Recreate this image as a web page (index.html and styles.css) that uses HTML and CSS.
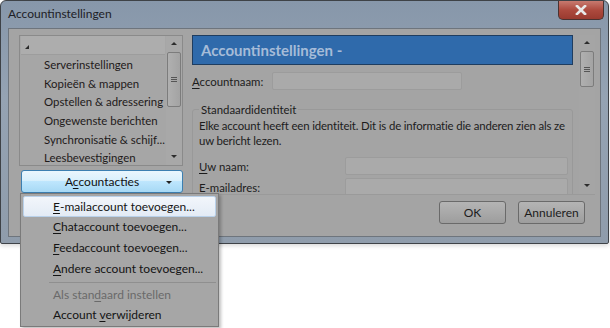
FILE: index.html
```html
<!DOCTYPE html>
<html>
<head>
  <meta charset="UTF-8">
  <title>Accountinstellingen</title>
  <link rel="stylesheet" href="styles.css">
</head>
<body>
  <div class="window">
    <div class="titlebar">
      <span class="title">Accountinstellingen</span>
      <button class="close-btn">
        <svg width="12" height="10" viewBox="0 0 12 10"><path d="M2 1 L10 9 M10 1 L2 9" stroke="#e8e8e8" stroke-width="2.6" stroke-linecap="square"/></svg>
      </button>
    </div>

    <div class="client">
      <div class="main">
        <!-- Left: account tree -->
        <div class="sidebar">
          <div class="tree">
            <div class="tree-list">
              <div class="tree-head"><span class="tree-arrow"></span></div>
              <div class="tree-item">Serverinstellingen</div>
              <div class="tree-item">Kopieën &amp; mappen</div>
              <div class="tree-item">Opstellen &amp; adressering</div>
              <div class="tree-item">Ongewenste berichten</div>
              <div class="tree-item">Synchronisatie &amp; schijf...</div>
              <div class="tree-item">Leesbevestigingen</div>
            </div>
            <div class="scrollbar">
              <span class="sb-up"></span>
              <span class="sb-thumb tree-thumb"><span class="grip"></span></span>
              <span class="sb-space"></span>
              <span class="sb-down"></span>
            </div>
          </div>
          <button class="actions-btn">A<u>c</u>countacties <span class="caret"></span></button>
        </div>

        <!-- Right: settings pane -->
        <div class="pane">
          <div class="pane-body">
            <div class="pane-header">Accountinstellingen -</div>
            <div class="row account-row">
              <label><u>A</u>ccountnaam:</label>
              <div class="input name-input"></div>
            </div>
            <fieldset class="group">
              <legend>Standaardidentiteit</legend>
              <p class="hint">Elke account heeft een identiteit. Dit is de informatie die anderen zien als ze uw bericht lezen.</p>
              <div class="row field-row">
                <label><u>U</u>w naam:</label>
                <div class="input wide-input"></div>
              </div>
              <div class="row field-row">
                <label>E-<u>m</u>ailadres:</label>
                <div class="input wide-input"></div>
              </div>
            </fieldset>
          </div>
          <div class="scrollbar pane-scroll">
            <span class="sb-up"></span>
            <span class="sb-thumb pane-thumb"><span class="grip"></span></span>
            <span class="sb-space"></span>
            <span class="sb-down"></span>
          </div>
        </div>
      </div>

      <div class="footer">
        <button class="btn">OK</button>
        <button class="btn">Annuleren</button>
      </div>
    </div>
  </div>

  <!-- Dropdown menu of Accountacties -->
  <div class="menu">
    <div class="menu-item active"><u>E</u>-mailaccount toevoegen...</div>
    <div class="menu-item"><u>C</u>hataccount toevoegen...</div>
    <div class="menu-item"><u>F</u>eedaccount toevoegen...</div>
    <div class="menu-item"><u>A</u>ndere account toevoegen...</div>
    <div class="menu-sep"></div>
    <div class="menu-item small disabled">Als stan<u>d</u>aard instellen</div>
    <div class="menu-item small">Account <u>v</u>erwijderen</div>
  </div>
</body>
</html>
```

FILE: styles.css
```css
* {
  box-sizing: border-box;
  margin: 0;
  padding: 0;
}

body {
  font-family: Lato, 'Open Sans', sans-serif;
  font-size: 11.4px;
  width: 610px;
  height: 328px;
  background: #ffffff;
  color: #1c1c1c;
  overflow: hidden;
  position: relative;
}

u {
  text-decoration: underline;
  text-underline-offset: 2px;
}

/* Window frame */
.window {
  width: 609px;
  height: 244px;
  background: linear-gradient(180deg, #8797aa 0%, #95a3b3 40%, #8f9cab 100%);
  border: 1px solid #3e4247;
  border-radius: 6px 6px 2px 2px;
  padding: 0 7px 6px 7px;
  display: flex;
  flex-direction: column;
  box-shadow: 0 2px 4px rgba(0,0,0,0.15);
}

.titlebar {
  height: 27px;
  display: flex;
  align-items: flex-start;
  justify-content: space-between;
}

.title {
  margin-top: 5px;
  font-size: 12px;
  color: #1d2026;
}

.close-btn {
  width: 46px;
  height: 19px;
  margin-right: -3px;
  border: 1px solid #4a3230;
  border-top: none;
  border-radius: 0 0 5px 5px;
  background: linear-gradient(180deg, #c77a70 0%, #ad4a3e 50%, #9a3a2f 100%);
  display: flex;
  align-items: center;
  justify-content: center;
}

.client {
  flex: 1;
  background: #a4a4a4;
  border: 1px solid #6e757d;
  padding: 6px 7px 0 10px;
  display: flex;
  flex-direction: column;
}

.main {
  display: flex;
  gap: 7px;
  height: 160px;
}

/* Left tree */
.sidebar {
  width: 165px;
  display: flex;
  flex-direction: column;
  gap: 4px;
}

.tree {
  height: 131px;
  border: 1px solid #8a8a8a;
  background: #a6a6a6;
  display: flex;
}

.tree-list {
  flex: 1;
  overflow: hidden;
}

.tree-head {
  height: 19px;
  margin: 0 1px;
  background: #adadad;
  border-bottom: 1px solid #9d9d9d;
  position: relative;
}

.tree-arrow {
  position: absolute;
  left: 4px;
  top: 9px;
  width: 0;
  height: 0;
  border-left: 4px solid transparent;
  border-bottom: 4px solid #2a2a2a;
}

.tree-item {
  height: 18.7px;
  line-height: 18.7px;
  padding-left: 24px;
  white-space: nowrap;
  color: #1e1a1a;
}

.tree-head + .tree-item {
  margin-top: 1px;
}

/* Scrollbars */
.scrollbar {
  width: 16px;
  display: flex;
  flex-direction: column;
  align-items: center;
  background: #a8a8a8;
}

.sb-up,
.sb-down {
  height: 16px;
  width: 16px;
  position: relative;
  flex-shrink: 0;
}

.sb-up::after,
.sb-down::after {
  content: "";
  position: absolute;
  left: 5px;
  top: 6px;
  border-left: 3px solid transparent;
  border-right: 3px solid transparent;
}

.sb-up::after {
  border-bottom: 3px solid #2c2c2c;
}

.sb-down::after {
  border-top: 3px solid #2c2c2c;
}

.sb-thumb {
  width: 14px;
  border: 1px solid #7c7c7c;
  border-radius: 2px;
  background: linear-gradient(90deg, #b0b0b0, #a3a3a3);
  display: flex;
  align-items: center;
  justify-content: center;
  flex-shrink: 0;
}

.tree-thumb {
  height: 55px;
}

.pane-thumb {
  height: 36px;
}

.grip {
  width: 6px;
  height: 5px;
  border-top: 1px solid #555;
  border-bottom: 1px solid #555;
  position: relative;
}

.grip::after {
  content: "";
  position: absolute;
  left: 0;
  right: 0;
  top: 1px;
  border-top: 1px solid #555;
}

.sb-space {
  flex: 1;
}

/* Accountacties button */
.actions-btn {
  height: 23px;
  width: 162px;
  margin-left: 2px;
  border: 1px solid #3c7fb1;
  border-radius: 3px;
  background: linear-gradient(180deg, #eaf6fd 0%, #d9f0fc 45%, #bee6fd 50%, #a7d9f5 100%);
  font-family: inherit;
  font-size: 12px;
  color: #111;
  position: relative;
  text-align: center;
}

.caret {
  position: absolute;
  right: 10px;
  top: 10px;
  border-left: 3px solid transparent;
  border-right: 3px solid transparent;
  border-top: 3px solid #222;
}

/* Right pane */
.pane {
  flex: 1;
  display: flex;
  gap: 6px;
  border-bottom: 1px solid #9a9a9a;
}

.pane-body {
  flex: 1;
  overflow: hidden;
  padding-left: 2px;
}

.pane-header {
  height: 30px;
  background: #2f6aab;
  border: 1px solid #1f3d60;
  color: #a6bcd8;
  font-weight: bold;
  font-size: 15px;
  padding: 5px 0 0 8px;
}

.row {
  display: flex;
  align-items: center;
}

.account-row {
  margin-top: 7px;
  gap: 9px;
}

.input {
  height: 18px;
  background: #aaaaaa;
  border: 1px solid #9c9c9c;
  border-radius: 2px;
}

.name-input {
  width: 190px;
}

.group {
  margin-top: 13px;
  width: 381px;
  border: 1px solid #999999;
  border-radius: 3px;
  padding: 0 2px 0 6px;
}

.group legend {
  padding: 0 2px;
  margin-left: 0;
}

.hint {
  line-height: 14.5px;
  margin-top: 3px;
  letter-spacing: -0.15px;
}

.field-row {
  margin-top: 9px;
  justify-content: space-between;
}

.field-row + .field-row {
  margin-top: 3px;
}

.wide-input {
  width: 223px;
  margin-right: 2px;
}

.pane-scroll {
  background: #a5a5a5;
}

/* Footer buttons */
.footer {
  display: flex;
  justify-content: flex-end;
  gap: 12px;
  padding: 6px 8px 0 0;
}

.btn {
  width: 67px;
  height: 23px;
  border: 1px solid #6a6a6a;
  border-radius: 3px;
  background: linear-gradient(180deg, #b4b4b4 0%, #a9a9a9 50%, #9d9d9d 100%);
  font-family: inherit;
  font-size: 12px;
  color: #1d1d1d;
}

/* Popup menu */
.menu {
  position: absolute;
  left: 20px;
  top: 193px;
  width: 199px;
  height: 134px;
  background: #a6a6a6;
  border: 1px solid #7a7a7a;
  box-shadow: 2px 2px 3px rgba(0,0,0,0.25);
  padding: 2px;
}

.menu-item {
  height: 21px;
  line-height: 20px;
  padding-left: 30px;
  font-size: 12px;
  color: #141414;
  white-space: nowrap;
}

.menu-item.small {
  height: 20px;
  line-height: 19px;
}

.menu-item.active {
  background: linear-gradient(180deg, #f2f6fb, #e3ebf5);
  border: 1px solid #b9d1ea;
  border-radius: 2px;
  line-height: 19px;
  padding-left: 29px;
}

.menu-item.disabled {
  color: #6a6a6a;
}

.menu-sep {
  height: 5px;
  margin-left: 26px;
  border-bottom: 1px solid #8f8f8f;
  position: relative;
  top: -2px;
}
```
